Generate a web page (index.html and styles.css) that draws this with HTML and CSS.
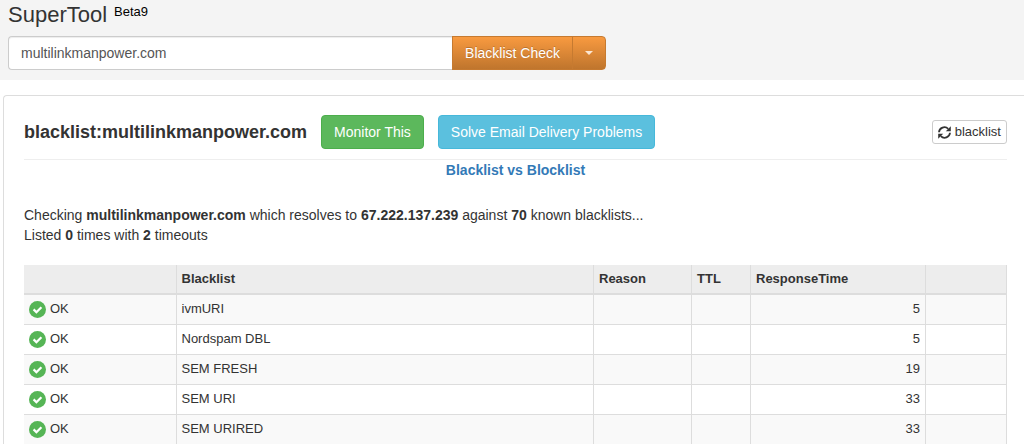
FILE: index.html
```html
<!DOCTYPE html>
<html lang="en">
<head>
  <meta charset="UTF-8">
  <meta name="viewport" content="width=device-width, initial-scale=1">
  <title>SuperTool</title>
  <link rel="stylesheet" href="styles.css">
</head>
<body>
  <svg class="defs" aria-hidden="true">
    <symbol id="icon-ok" viewBox="0 0 17 17">
      <circle cx="8.5" cy="8.5" r="8.5" fill="#56b556"/>
      <path d="M4.6 8.4l2.8 2.8 5-5" fill="none" stroke="#fff" stroke-width="2.3"/>
    </symbol>
  </svg>

  <header class="tool-bar">
    <h1>SuperTool <sup>Beta9</sup></h1>
    <form class="search" onsubmit="return false">
      <input type="text" class="search-input" aria-label="Domain" value="multilinkmanpower.com">
      <button type="submit" class="btn btn-orange">Blacklist Check</button>
      <button type="button" class="btn btn-orange btn-caret" aria-label="More tools"><span class="caret"></span></button>
    </form>
  </header>

  <main class="result">
    <div class="result-head">
      <h2>blacklist:multilinkmanpower.com</h2>
      <button type="button" class="btn btn-success">Monitor This</button>
      <button type="button" class="btn btn-info">Solve Email Delivery Problems</button>
      <button type="button" class="btn-refresh">
        <svg width="13" height="13" viewBox="0 0 13 13" aria-hidden="true">
          <path d="M1 6.2A5.4 5.4 0 0 1 10.2 2.8M12 6.8A5.4 5.4 0 0 1 2.8 10.2" fill="none" stroke="#333" stroke-width="1.8"/>
          <path d="M12.8 .2v5H7.8zM.2 12.8v-5h5z" fill="#333"/>
        </svg>
        blacklist
      </button>
    </div>
    <p class="compare"><a href="#">Blacklist vs Blocklist</a></p>

    <p class="summary">
      Checking <b>multilinkmanpower.com</b> which resolves to <b>67.222.137.239</b> against <b>70</b> known blacklists...<br>
      Listed <b>0</b> times with <b>2</b> timeouts
    </p>

    <table class="lists">
      <colgroup>
        <col class="col-status">
        <col>
        <col class="col-reason">
        <col class="col-ttl">
        <col class="col-time">
        <col class="col-action">
      </colgroup>
      <thead>
        <tr><th></th><th>Blacklist</th><th>Reason</th><th>TTL</th><th>ResponseTime</th><th></th></tr>
      </thead>
      <tbody>
        <tr><td><span class="status"><svg><use href="#icon-ok"/></svg>OK</span></td><td>ivmURI</td><td></td><td></td><td class="time">5</td><td></td></tr>
        <tr><td><span class="status"><svg><use href="#icon-ok"/></svg>OK</span></td><td>Nordspam DBL</td><td></td><td></td><td class="time">5</td><td></td></tr>
        <tr><td><span class="status"><svg><use href="#icon-ok"/></svg>OK</span></td><td>SEM FRESH</td><td></td><td></td><td class="time">19</td><td></td></tr>
        <tr><td><span class="status"><svg><use href="#icon-ok"/></svg>OK</span></td><td>SEM URI</td><td></td><td></td><td class="time">33</td><td></td></tr>
        <tr><td><span class="status"><svg><use href="#icon-ok"/></svg>OK</span></td><td>SEM URIRED</td><td></td><td></td><td class="time">33</td><td></td></tr>
      </tbody>
    </table>
  </main>
</body>
</html>
```

FILE: styles.css
```css
* {
  box-sizing: border-box;
}

body {
  margin: 0;
  font-family: "Liberation Sans", Arial, sans-serif;
  font-size: 14px;
  line-height: 20px;
  color: #333;
  background: #fff;
}

h1, h2, p {
  margin: 0;
}

button, input {
  font: inherit;
}

.defs {
  display: none;
}

/* top bar */
.tool-bar {
  padding: 4px 8px 10px;
  background: #f4f4f4;
}

h1 {
  display: flex;
  gap: 7px;
  margin-bottom: 10px;
  font-size: 22px;
  font-weight: normal;
  line-height: 22px;
}

h1 sup {
  font-size: 13px;
  line-height: 16px;
  color: #000;
}

.search {
  display: flex;
  width: 60%;
  max-width: 598px;
}

.search-input {
  flex: 1;
  min-width: 0;
  height: 34px;
  padding: 6px 12px;
  border: 1px solid #ccc;
  border-right: 0;
  border-radius: 4px 0 0 4px;
  background: #fff;
  color: #555;
  box-shadow: inset 0 1px 1px rgba(0, 0, 0, 0.075);
}

.btn {
  height: 34px;
  padding: 6px 12px;
  border: 1px solid transparent;
  border-radius: 4px;
  color: #fff;
  line-height: 20px;
  white-space: nowrap;
  cursor: pointer;
}

.btn-orange {
  border-color: #c67a30;
  border-radius: 0;
  background: linear-gradient(#f89a40, #bf752d);
  text-shadow: 0 -1px 0 rgba(0, 0, 0, 0.2);
}

.btn-caret {
  display: flex;
  align-items: center;
  margin-left: -1px;
  border-radius: 0 4px 4px 0;
}

.caret {
  border-top: 4px solid #fbe6d2;
  border-left: 4px solid transparent;
  border-right: 4px solid transparent;
}

.btn-success {
  border-color: #4cae4c;
  background: #5cb85c;
}

.btn-info {
  border-color: #46b8da;
  background: #5bc0de;
}

/* result panel, runs off to the right edge */
.result {
  margin: 15px 0 0 3px;
  padding: 19px 17px 0 20px;
  border: 1px solid #ddd;
  border-width: 1px 0 0 1px;
  border-radius: 4px 0 0 0;
}

.result-head {
  display: flex;
  align-items: center;
  gap: 14px;
  padding-bottom: 10px;
  border-bottom: 1px solid #eee;
}

h2 {
  font-size: 18px;
  line-height: 20px;
}

.btn-refresh {
  display: flex;
  align-items: center;
  gap: 4px;
  height: 24px;
  margin-left: auto;
  padding: 0 5px;
  border: 1px solid #ccc;
  border-radius: 3px;
  background: #fff;
  color: #333;
  font-size: 13px;
  cursor: pointer;
}

.compare {
  font-weight: bold;
  text-align: center;
}

.compare a {
  color: #337ab7;
  text-decoration: none;
}

.summary {
  margin: 25px 0 20px;
}

/* blacklist table */
.lists {
  width: 100%;
  border-collapse: collapse;
  table-layout: fixed;
  font-size: 13px;
}

.lists th,
.lists td {
  height: 30px;
  padding: 0 5px;
  border: 1px solid #ddd;
  text-align: left;
}

.lists th {
  height: 29px;
  border-top: 0;
  border-bottom: 2px solid #ddd;
  background: #ededed;
}

.lists th:first-child,
.lists td:first-child {
  border-left: 0;
}

.lists tbody tr:nth-child(odd) {
  background: #f9f9f9;
}

.lists .time {
  text-align: right;
}

.col-status { width: 152px; }
.col-reason { width: 98px; }
.col-ttl { width: 59px; }
.col-time { width: 175px; }
.col-action { width: 81px; }

.status {
  display: flex;
  align-items: center;
  gap: 4px;
}

.status svg {
  width: 17px;
  height: 17px;
}
```
